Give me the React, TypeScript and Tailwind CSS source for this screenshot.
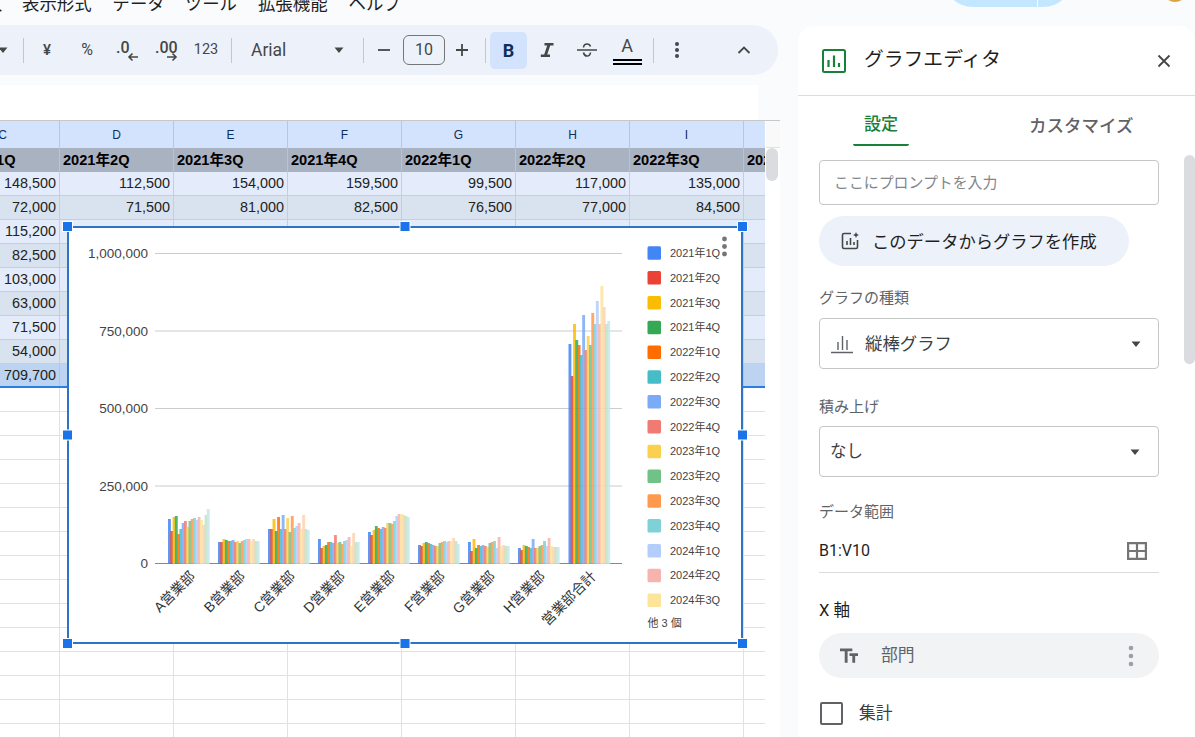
import React from "react";

const COL_LETTERS = ["C", "D", "E", "F", "G", "H", "I", "J"];
const HEADERS = ["2021年1Q", "2021年2Q", "2021年3Q", "2021年4Q", "2022年1Q", "2022年2Q", "2022年3Q", "2022年4Q"];

// only what is not hidden by the chart
const DATA_ROWS = [
  { bg: "bg-[#e4ecfb]", cells: ["148,500", "112,500", "154,000", "159,500", "99,500", "117,000", "135,000", ""] },
  { bg: "bg-[#d9e3f0]", cells: ["72,000", "71,500", "81,000", "82,500", "76,500", "77,000", "84,500", ""] },
  { bg: "bg-[#e4ecfb]", cells: ["115,200", "", "", "", "", "", "", ""] },
  { bg: "bg-[#d9e3f0]", cells: ["82,500", "", "", "", "", "", "", ""] },
  { bg: "bg-[#e4ecfb]", cells: ["103,000", "", "", "", "", "", "", ""] },
  { bg: "bg-[#d9e3f0]", cells: ["63,000", "", "", "", "", "", "", ""] },
  { bg: "bg-[#e4ecfb]", cells: ["71,500", "", "", "", "", "", "", ""] },
  { bg: "bg-[#d9e3f0]", cells: ["54,000", "", "", "", "", "", "", ""] },
];

const SERIES = [
  ["2021年1Q", "#4285f4"],
  ["2021年2Q", "#ea4335"],
  ["2021年3Q", "#fbbc04"],
  ["2021年4Q", "#34a853"],
  ["2022年1Q", "#ff6d01"],
  ["2022年2Q", "#46bdc6"],
  ["2022年3Q", "#7baaf7"],
  ["2022年4Q", "#f07b72"],
  ["2023年1Q", "#fcd04f"],
  ["2023年2Q", "#71c287"],
  ["2023年3Q", "#ff994d"],
  ["2023年4Q", "#7ed1d7"],
  ["2024年1Q", "#b3cefb"],
  ["2024年2Q", "#f7b4ae"],
  ["2024年3Q", "#fde49b"],
  ["2024年4Q", "#ffd2b0"],
  ["2025年1Q", "#bfe3c5"],
  ["2025年2Q", "#c4e8ea"],
];

// bar heights in px, per group and series
const GROUPS = [
  { name: "A営業部", x: 168, h: [45, 33, 47, 48, 30, 35, 41, 43, 37, 43, 45, 46, 44, 47, 44, 39, 49, 55] },
  { name: "B営業部", x: 218, h: [22, 22, 25, 24, 23, 23, 24, 22, 23, 21, 23, 24, 25, 25, 23, 25, 23, 23] },
  { name: "C営業部", x: 268, h: [35, 35, 45, 33, 47, 35, 49, 35, 46, 32, 48, 36, 38, 41, 35, 49, 35, 34] },
  { name: "D営業部", x: 318, h: [25, 16, 18, 19, 22, 22, 21, 29, 21, 22, 20, 23, 24, 27, 18, 31, 22, 22] },
  { name: "E営業部", x: 368, h: [32, 29, 34, 38, 36, 35, 37, 36, 41, 41, 40, 43, 48, 50, 50, 49, 48, 47] },
  { name: "F営業部", x: 418, h: [19, 18, 21, 22, 21, 20, 19, 18, 18, 21, 22, 23, 22, 23, 23, 26, 23, 20] },
  { name: "G営業部", x: 468, h: [22, 13, 25, 16, 19, 18, 19, 18, 17, 21, 22, 23, 16, 27, 18, 19, 18, 18] },
  { name: "H営業部", x: 518, h: [16, 14, 19, 18, 17, 16, 25, 16, 16, 18, 19, 23, 18, 26, 18, 17, 17, 17] },
  { name: "営業部合計", x: 568.5, h: [220, 188, 240, 224, 219, 209, 249, 214, 228, 219, 251, 240, 263, 240, 278, 257, 240, 243] },
];

const Y_TICKS = [
  ["1,000,000", 253.5],
  ["750,000", 331],
  ["500,000", 408.5],
  ["250,000", 486],
] as const;

const HANDLES = [
  "-left-[6px] -top-[6px]",
  "left-1/2 -translate-x-1/2 -top-[6px]",
  "-right-[6px] -top-[6px]",
  "-left-[6px] top-1/2 -translate-y-1/2",
  "-right-[6px] top-1/2 -translate-y-1/2",
  "-left-[6px] -bottom-[6px]",
  "left-1/2 -translate-x-1/2 -bottom-[6px]",
  "-right-[6px] -bottom-[6px]",
];

const Sep = () => <div className="h-[25px] w-px shrink-0 bg-[#c7c7c7]" />;

const Caret = ({ className = "" }: { className?: string }) => (
  <svg className={className} width="14" height="14" viewBox="0 0 14 14" fill="#444746">
    <path d="M2.5 4.5h9L7 10z" />
  </svg>
);

function Toolbar() {
  return (
    <div className="flex h-[50px] w-[778px] items-center rounded-r-[25px] bg-[#edf2fa] font-['Roboto','Noto_Sans_CJK_JP',sans-serif] text-[#444746]">
      <div className="w-[23px] shrink-0">
        <Caret className="-ml-[4px]" />
      </div>
      <Sep />
      <div className="ml-[3px] flex w-[40px] justify-center text-[15px] font-medium">¥</div>
      <div className="flex w-[40px] justify-center text-[16px]">%</div>
      <div className="relative h-[30px] w-[39px] pl-[9px] pt-[1px] text-[16px] font-medium">
        .0
        <svg className="absolute left-[20px] top-[17px]" width="12" height="10" viewBox="0 0 12 10" fill="none" stroke="#444746" strokeWidth="1.6">
          <path d="M11 5H2M5.5 1.5 2 5l3.5 3.5" />
        </svg>
      </div>
      <div className="relative h-[30px] w-[40px] pl-[9px] pt-[1px] text-[16px] font-medium">
        .00
        <svg className="absolute left-[20px] top-[17px]" width="12" height="10" viewBox="0 0 12 10" fill="none" stroke="#444746" strokeWidth="1.6">
          <path d="M1 5h9M6.5 1.5 10 5 6.5 8.5" />
        </svg>
      </div>
      <div className="flex w-[40px] justify-center text-[14.5px]">123</div>
      <div className="ml-[5px]">
        <Sep />
      </div>
      <div className="ml-[19px] flex w-[95px] items-center justify-between text-[17.5px]">
        <span>Arial</span>
        <Caret />
      </div>
      <div className="ml-[17px]">
        <Sep />
      </div>
      <div className="flex w-[39px] justify-center">
        <svg width="14" height="14" viewBox="0 0 14 14" stroke="#444746" strokeWidth="1.8">
          <path d="M1 7h12" />
        </svg>
      </div>
      <div className="flex h-[30px] w-[42px] items-center justify-center rounded-[6px] border border-[#747775] text-[16px]">10</div>
      <div className="flex w-[34px] justify-center">
        <svg width="14" height="14" viewBox="0 0 14 14" stroke="#444746" strokeWidth="1.8">
          <path d="M1 7h12M7 1v12" />
        </svg>
      </div>
      <div className="ml-[6px]">
        <Sep />
      </div>
      <div className="ml-[4px] flex h-[37px] w-[37px] items-center justify-center rounded-[5px] bg-[#d3e3fd] text-[18px] font-bold text-[#0b2f5f]">B</div>
      <div className="flex w-[40px] justify-center">
        <svg width="20" height="20" viewBox="0 0 20 20" fill="#444746">
          <path d="M7.5 3h9v2.4h-3.3l-3 9.2h2.8V17H3.8v-2.4h3.4l3-9.2H7.5z" />
        </svg>
      </div>
      <div className="flex w-[40px] justify-center">
        <svg width="22" height="20" viewBox="0 0 22 20" fill="none" stroke="#444746" strokeWidth="1.6">
          <path d="M1 10h20M7.5 7.500C7.800 5 9.500 4 11 4s3 .8 3.500 2.500M7.500 12.500c.4 2.200 1.800 3.500 3.500 3.500s3.200-1.200 3.500-3.500" />
        </svg>
      </div>
      <div className="flex w-[40px] flex-col items-center">
        <span className="text-[18px] leading-[22px]">A</span>
        <div className="mt-[2px] h-[6px] w-[29px] border-y-2 border-black" />
      </div>
      <div className="ml-[6px]">
        <Sep />
      </div>
      <div className="flex w-[46px] justify-center">
        <svg width="6" height="18" viewBox="0 0 6 18" fill="#444746">
          <circle cx="3" cy="3" r="2" />
          <circle cx="3" cy="9" r="2" />
          <circle cx="3" cy="15" r="2" />
        </svg>
      </div>
      <div className="ml-[24px] flex w-[40px] justify-center">
        <svg width="14" height="10" viewBox="0 0 14 10" fill="none" stroke="#444746" strokeWidth="1.8">
          <path d="M1.5 8 7 2.5 12.5 8" />
        </svg>
      </div>
    </div>
  );
}

function Sheet() {
  return (
    <div className="flex w-[780px] flex-1 overflow-hidden border-t border-[#c7c7c7] bg-white font-['Liberation_Sans','Noto_Sans_CJK_JP',sans-serif]">
      <div className="w-[765px] shrink-0 overflow-hidden">
        <div className="-ml-[54px] w-[912px]">
          <div className="flex h-[27px] bg-[#d3e3fd]">
            {COL_LETTERS.map((c) => (
              <div key={c} className="flex w-[114px] shrink-0 items-center justify-center border-r border-[#c0c6cf] text-[12px] text-[#0b2f5f]">
                {c}
              </div>
            ))}
          </div>
          <div className="flex h-[24px] bg-[#a9b2c0]">
            {HEADERS.map((h) => (
              <div key={h} className="w-[114px] shrink-0 whitespace-nowrap border-r border-[#bcc3cd] pl-[3px] text-[14.6px] font-bold leading-[24px] text-black">
                {h}
              </div>
            ))}
          </div>
          {DATA_ROWS.map((row, i) => (
            <div key={i} className={`flex h-[24px] ${row.bg}`}>
              {row.cells.map((v, j) => (
                <div key={j} className="w-[114px] shrink-0 border-b border-r border-[#c6ced9] pr-[3px] text-right text-[14.4px] leading-[23px] text-[#222]">
                  {v}
                </div>
              ))}
            </div>
          ))}
          <div className="flex h-[24px] border-b-2 border-[#2b7de0] bg-[#bcd4f2]">
            {COL_LETTERS.map((c, j) => (
              <div key={c} className="w-[114px] shrink-0 border-r border-[#b3c6de] pr-[3px] text-right text-[14.4px] leading-[23px] text-[#222]">
                {j === 0 ? "709,700" : ""}
              </div>
            ))}
          </div>
          {Array.from({ length: 15 }).map((_, i) => (
            <div key={i} className="flex h-[24px]">
              {COL_LETTERS.map((c) => (
                <div key={c} className="w-[114px] shrink-0 border-b border-r border-[#e1e1e1]" />
              ))}
            </div>
          ))}
        </div>
      </div>
      <div className="flex-1 pl-px">
        <div className="h-[27px] border-b border-[#e1e1e1] bg-[#f9f9f9]" />
        <div className="h-[33px] w-[12px] rounded-full bg-[#dadce0]" />
      </div>
    </div>
  );
}

function Chart() {
  return (
    <div className="absolute left-[67px] top-[226px] h-[418px] w-[676px] border-2 border-[#2f74c4] bg-white font-['Liberation_Sans','Noto_Sans_CJK_JP',sans-serif]">
      <svg className="block h-full w-full" viewBox="69 228 672 414">
        {Y_TICKS.map(([label, y]) => (
          <g key={label}>
            <line x1="155" x2="622" y1={y} y2={y} stroke="#cccccc" strokeWidth="1.2" />
            <text x="148" y={y + 4.5} textAnchor="end" fontSize="13.5" fill="#444444">
              {label}
            </text>
          </g>
        ))}
        <text x="148" y="568" textAnchor="end" fontSize="13.5" fill="#444444">
          0
        </text>
        <line x1="155" x2="622" y1="563.5" y2="563.5" stroke="#888888" strokeWidth="1.2" />
        {GROUPS.map((g) => (
          <g key={g.name}>
            {g.h.map((h, i) => (
              <rect key={i} x={g.x + i * 2.28} y={564 - h} width="2.9" height={h} fill={SERIES[i][1]} fillOpacity="0.85" />
            ))}
            <text
              transform={`translate(${g.name.length > 4 ? 597 : g.x + 28} 577) rotate(-45)`}
              textAnchor="end"
              fontSize="14"
              fill="#333333"
            >
              {g.name}
            </text>
          </g>
        ))}
        {SERIES.slice(0, 15).map(([label, color], i) => (
          <g key={label}>
            <rect x="647.5" y={246.3 + i * 24.8} width="13.5" height="13.5" rx="1.5" fill={color} />
            <text x="670" y={257 + i * 24.8} fontSize="11" fill="#444444">
              {label}
            </text>
          </g>
        ))}
        <text x="647.5" y="627" fontSize="11" fill="#444444">
          他 3 個
        </text>
        <circle cx="724.5" cy="239" r="2.4" fill="#757575" />
        <circle cx="724.5" cy="246.5" r="2.4" fill="#757575" />
        <circle cx="724.5" cy="254" r="2.4" fill="#757575" />
      </svg>
      {HANDLES.map((pos) => (
        <div key={pos} className={`absolute size-[9px] bg-[#1a73e8] ring-1 ring-white ${pos}`} />
      ))}
    </div>
  );
}

function Panel() {
  return (
    <div className="relative flex-1 overflow-hidden rounded-t-[16px] bg-white font-['Roboto','Noto_Sans_CJK_JP',sans-serif]">
      <div className="flex h-[70px] items-center border-b border-[#dadce0] pl-[24px] pr-[19px]">
        <svg width="24" height="24" viewBox="0 0 24 24" fill="none">
          <rect x="1" y="1" width="22" height="22" rx="1.5" stroke="#188038" strokeWidth="2" />
          <path d="M6.5 11v7M12 6.5V18M17 14v4" stroke="#188038" strokeWidth="2.2" />
        </svg>
        <span className="ml-[18px] -mt-[2px] text-[19.8px] text-[#1f1f1f]">グラフエディタ</span>
        <svg className="ml-auto" width="24" height="24" viewBox="0 0 24 24" stroke="#444746" strokeWidth="1.8">
          <path d="M6.5 6.5l11 11M17.5 6.5l-11 11" />
        </svg>
      </div>
      <div className="ml-[55px] flex h-[50px]">
        <div className="flex w-[56px] items-center justify-center rounded-b-[2px] border-b-[2.5px] border-[#188038] pt-[10px] text-[17px] font-medium text-[#188038]">設定</div>
        <div className="ml-[120px] flex items-center whitespace-nowrap pt-[11px] text-[17.5px] font-medium text-[#5f6368]">カスタマイズ</div>
      </div>
      <div className="ml-[21px] w-[340px]">
        <div className="mt-[14px] flex h-[45px] items-center rounded-[4px] border border-[#c4c7c5] pl-[14px] pt-[2px] text-[14.9px] text-[#80868b]">ここにプロンプトを入力</div>
        <div className="mt-[11px] flex h-[50px] w-[310px] items-center rounded-full bg-[#edf2fa] pl-[22px] text-[17.3px] text-[#1f1f1f]">
          <svg width="19" height="20" viewBox="0 0 19 20" fill="none" stroke="#444746" strokeWidth="1.6">
            <path d="M10 2.5H3a1.5 1.5 0 0 0-1.500 1.500v12A1.500 1.500 0 0 0 3 17.500h12a1.500 1.500 0 0 0 1.500-1.500V9" />
            <path d="M6 14v-4M9.500 14V7M13 14v-3" />
            <path d="M15 1l.9 2.100L18 4l-2.100.9L15 7l-.9-2.100L12 4l2.100-.9z" fill="#444746" stroke="none" />
          </svg>
          <span className="ml-[12px] mt-[3px]">このデータからグラフを作成</span>
        </div>
        <div className="mt-[22px] text-[15px] leading-[20px] text-[#5f6368]">グラフの種類</div>
        <div className="mt-[10px] flex h-[51px] items-center rounded-[4px] border border-[#c4c7c5] pl-[11px] pr-[15px] text-[17.4px] text-[#3c4043]">
          <svg width="22" height="20" viewBox="0 0 22 20" stroke="#5f6368" strokeWidth="1.4">
            <path d="M0 18.500h22M7 16V8M11.500 16V2M16 16V6" />
          </svg>
          <span className="ml-[12px] mt-[2px]">縦棒グラフ</span>
          <Caret className="ml-auto" />
        </div>
        <div className="mt-[28px] text-[15px] leading-[20px] text-[#5f6368]">積み上げ</div>
        <div className="mt-[9px] flex h-[51px] items-center rounded-[4px] border border-[#c4c7c5] pl-[10px] pr-[16px] text-[16.5px] text-[#3c4043]">
          <span className="mt-[2px]">なし</span>
          <Caret className="ml-auto" />
        </div>
        <div className="mt-[25px] text-[15px] leading-[20px] text-[#5f6368]">データ範囲</div>
        <div className="flex h-[51px] items-center border-b border-[#dadce0] pr-[12px] pt-[8px] text-[16px] text-[#1f1f1f]">
          B1:V10
          <svg className="ml-auto" width="20" height="18" viewBox="0 0 20 18" fill="none" stroke="#757575" strokeWidth="2.2">
            <path d="M1.100 1.100h17.800v15.800H1.100zM10 1v16M1 9h18" />
          </svg>
        </div>
        <div className="mt-[28px] text-[16.5px] leading-[20px] text-[#1f1f1f]">X 軸</div>
        <div className="mt-[12px] flex h-[45px] items-center rounded-full bg-[#f1f3f4] pl-[21px] pr-[25px] text-[16.8px] text-[#5f6368]">
          <svg width="18" height="18" viewBox="2.500 2.500 19 19" fill="#5f6368">
            <path d="M2.500 4v3h5v12h3V7h5V4h-13zm19 5h-9v3h3v7h3v-7h3V9z" />
          </svg>
          <span className="ml-[23px]">部門</span>
          <svg className="ml-auto" width="6" height="22" viewBox="0 0 6 22" fill="#9aa0a6">
            <circle cx="3" cy="3" r="2.300" />
            <circle cx="3" cy="11" r="2.300" />
            <circle cx="3" cy="19" r="2.300" />
          </svg>
        </div>
        <div className="mt-[23px] flex items-center">
          <div className="ml-px size-[23px] rounded-[2px] border-2 border-[#5f6368]" />
          <span className="ml-[16px] text-[16.8px] text-[#3c4043]">集計</span>
        </div>
      </div>
      <div className="absolute right-0 top-[129px] h-[209px] w-[11px] rounded-full bg-[#dadce0]" />
    </div>
  );
}

export default function App() {
  return (
    <div className="relative flex h-[737px] w-[1195px] overflow-hidden bg-[#f9fbfd]">
      <div className="flex w-[798px] shrink-0 flex-col">
        <div className="flex h-[25px] shrink-0 items-start font-['Roboto','Noto_Sans_CJK_JP',sans-serif] text-[17.4px] leading-[24px] text-[#1f1f1f]">
          <div className="-mt-[8px] flex">
            <span className="-ml-[15px] w-[37px]">入</span>
            <span>表示形式</span>
            <span className="ml-[21px]">データ</span>
            <span className="ml-[20px]">ツール</span>
            <span className="ml-[21px]">拡張機能</span>
            <span className="ml-[21px]">ヘルプ</span>
          </div>
        </div>
        <Toolbar />
        <div className="mt-[10px] h-[35px] w-[758px] shrink-0 bg-white" />
        <Sheet />
      </div>
      <div className="flex flex-1 flex-col">
        <div className="flex h-[26px] shrink-0 items-start pl-[145px]">
          <div className="-mt-[23px] flex h-[30px] w-[130px] overflow-hidden rounded-b-full">
            <div className="w-[94px] bg-[#c2e7ff]" />
            <div className="ml-px flex-1 bg-[#c2e7ff]" />
          </div>
          <div className="-mt-[22px] ml-[90px] size-[24px] rounded-full bg-[#d9a441]" />
        </div>
        <Panel />
      </div>
      <Chart />
    </div>
  );
}
